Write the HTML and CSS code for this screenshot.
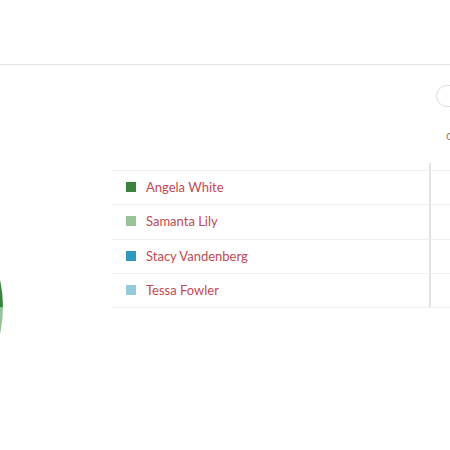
FILE: index.html
```html
<!DOCTYPE html>
<html>
<head>
  <title>Team Share</title>
  <link rel="stylesheet" href="styles.css">
</head>
<body>

  <div class="topbar"></div>

  <div class="main">
    <div class="chart">
      <svg width="111" height="330" viewBox="0 0 111 330">
        <path d="M -120 242 L -120 119 A 123 123 0 0 1 3 242 Z" fill="#3a8440"/>
        <path d="M -120 242 L 3 242 A 123 123 0 0 1 -120 365 Z" fill="#98c298"/>
      </svg>
    </div>

    <div class="panel">
      <div class="toolbar">
        <div class="pill"></div>
      </div>
      <div class="col-title">c</div>

      <div class="table">
        <div class="row head">
          <div class="name"></div>
          <div class="value"></div>
        </div>
        <div class="row">
          <div class="name"><span class="swatch green"></span>Angela White</div>
          <div class="value"></div>
        </div>
        <div class="row">
          <div class="name"><span class="swatch light-green"></span>Samanta Lily</div>
          <div class="value"></div>
        </div>
        <div class="row">
          <div class="name"><span class="swatch blue"></span>Stacy Vandenberg</div>
          <div class="value"></div>
        </div>
        <div class="row last">
          <div class="name"><span class="swatch light-blue"></span>Tessa Fowler</div>
          <div class="value"></div>
        </div>
      </div>
    </div>
  </div>

</body>
</html>
```

FILE: styles.css
```css
html, body {
  overflow: hidden;
}

body {
  margin: 0;
  font-family: Lato, "Noto Sans", sans-serif;
  background-color: #fff;
}

.topbar {
  height: 64px;
  border-bottom: 1px solid #e3e3e3;
}

.main {
  display: flex;
}

.chart {
  flex: 0 0 111px;
}

.chart svg {
  display: block;
}

.panel {
  flex: 1;
  min-width: 0;
}

.toolbar {
  padding: 20px 0 0 325px;
}

.pill {
  box-sizing: border-box;
  width: 40px;
  height: 22px;
  border: 1px solid #dcdcdc;
  border-radius: 11px;
}

.col-title {
  margin-top: 20px;
  padding-left: 335px;
  font-size: 13px;
  line-height: 16px;
  color: #a08770;
}

.table {
  margin-top: 20px;
}

.row {
  display: flex;
  height: 33.25px;
  border-top: 1px solid #efefef;
}

.row.head {
  height: 7px;
  border-top: none;
}

.row.last {
  border-bottom: 1px solid #efefef;
}

.name {
  flex: 0 0 318px;
  display: flex;
  align-items: center;
  gap: 10px;
  padding-left: 15px;
  padding-bottom: 1px;
  box-sizing: border-box;
  font-size: 13px;
  color: #c24a52;
}

.value {
  flex: 1;
  border-left: 2px solid #e2e2e2;
}

.swatch {
  width: 10px;
  height: 10px;
}

.green {
  background-color: #3a8440;
}

.light-green {
  background-color: #98c298;
}

.blue {
  background-color: #2a9bbf;
}

.light-blue {
  background-color: #94cbdb;
}
```
